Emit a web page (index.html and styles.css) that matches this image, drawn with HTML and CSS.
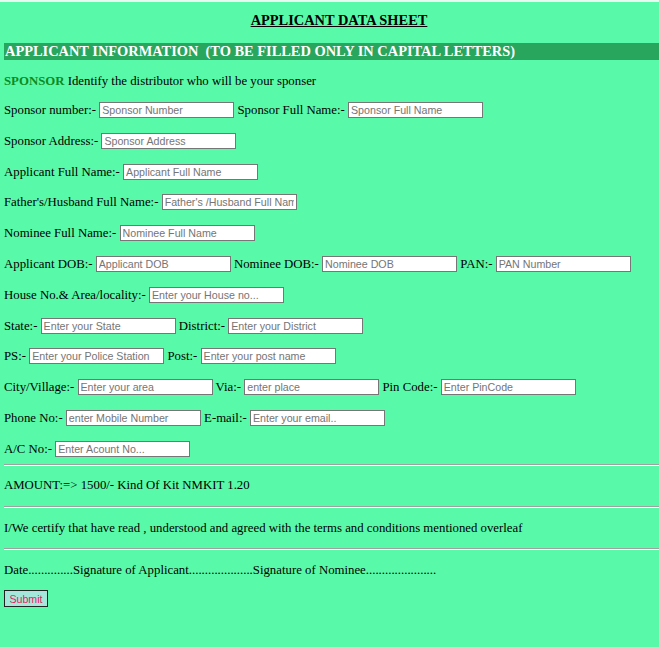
FILE: index.html
```html
<!DOCTYPE html>
<html>
<head>
<meta charset="utf-8">
<title>Applicant Data Sheet</title>
<link rel="stylesheet" href="styles.css">
</head>
<body>
<div class="topline"></div>
<div class="page">
  <div class="title"><u>APPLICANT DATA SHEET</u></div>
  <div class="bar">APPLICANT INFORMATION&nbsp; (TO BE FILLED ONLY IN CAPITAL LETTERS)</div>
  <div class="sponsor"><b class="green">SPONSOR</b> Identify the distributor who will be your sponser</div>
  <form class="form">
    <div class="row">Sponsor number:- <input type="text" placeholder="Sponsor Number"> Sponsor Full Name:- <input type="text" placeholder="Sponsor Full Name"></div>
    <div class="row">Sponsor Address:- <input type="text" placeholder="Sponsor Address"></div>
    <div class="row">Applicant Full Name:- <input type="text" placeholder="Applicant Full Name"></div>
    <div class="row">Father's/Husband Full Name:- <input type="text" placeholder="Father's /Husband Full Name"></div>
    <div class="row">Nominee Full Name:- <input type="text" placeholder="Nominee Full Name"></div>
    <div class="row">Applicant DOB:- <input type="text" placeholder="Applicant DOB"> Nominee DOB:- <input type="text" placeholder="Nominee DOB"> PAN:- <input type="text" placeholder="PAN Number"></div>
    <div class="row">House No.&amp; Area/locality:- <input type="text" placeholder="Enter your House no..."></div>
    <div class="row">State:- <input type="text" placeholder="Enter your State"> District:- <input type="text" placeholder="Enter your District"></div>
    <div class="row">PS:- <input type="text" placeholder="Enter your Police Station"> Post:- <input type="text" placeholder="Enter your post name"></div>
    <div class="row">City/Village:- <input type="text" placeholder="Enter your area"> Via:- <input type="text" placeholder="enter place"> Pin Code:- <input type="text" placeholder="Enter PinCode"></div>
    <div class="row">Phone No:- <input type="text" placeholder="enter Mobile Number"> E-mail:- <input type="text" placeholder="Enter your email.."></div>
    <div class="row row-last">A/C No:- <input type="text" placeholder="Enter Acount No..."></div>
    <hr class="rule first">
    <div class="line">AMOUNT:=&gt; 1500/- Kind Of Kit NMKIT 1.20</div>
    <hr class="rule">
    <div class="line">I/We certify that have read , understood and agreed with the terms and conditions mentioned overleaf</div>
    <hr class="rule">
    <div class="line">Date..............Signature of Applicant....................Signature of Nominee......................</div>
    <button type="button" class="submit">Submit</button>
  </form>
</div>
</body>
</html>
```
FILE: styles.css
```css
html, body {
  margin: 0;
  padding: 0;
  background: #58faa9;
}
body {
  font-family: "Liberation Serif", "Times New Roman", serif;
  font-size: 12.8px;
  color: #000;
  overflow: hidden;
}
.topline {
  height: 2px;
  background: #e9fbf1;
}
.page {
  padding-left: 4px;
}
.title {
  margin-top: 10px;
  height: 16px;
  line-height: 16px;
  text-align: center;
  font-weight: bold;
  font-size: 14.4px;
  padding-left: 15px;
}
.bar {
  margin-top: 15px;
  height: 17px;
  line-height: 17px;
  background: #29a65e;
  color: #fff;
  font-weight: bold;
  font-size: 14.4px;
  padding-left: 1px;
  white-space: nowrap;
}
.sponsor {
  margin-top: 13.5px;
  line-height: 15px;
  height: 15px;
}
.green {
  color: #0f8a22;
}
.form {
  margin: 12.5px 0 0 0;
}
.row {
  height: 18px;
  line-height: 18px;
  margin-bottom: 12.8px;
  white-space: nowrap;
}
.row.row-last {
  margin-bottom: 0;
}
.row input {
  box-sizing: border-box;
  width: 135px;
  height: 16px;
  vertical-align: middle;
  margin: -2px 0 0 0;
  padding: 0 2px;
  border: 1px solid #767676;
  background: #fff;
  font-family: "Liberation Sans", Arial, sans-serif;
  font-size: 10.67px;
  color: #000;
}
.row input::placeholder {
  color: #757575;
  opacity: 1;
}
.rule {
  margin: 0;
  height: 0;
  border: 0;
  border-top: 1px solid #a0a0a0;
  border-bottom: 1px solid #f4fff8;
  margin-right: -4px;
}
.rule.first {
  margin-top: 6px;
}
.line {
  margin-top: 12.6px;
  margin-bottom: 12.6px;
  line-height: 15px;
  height: 15px;
  white-space: nowrap;
}
.submit {
  display: block;
  box-sizing: border-box;
  height: 17px;
  width: 44px;
  margin: 0;
  padding: 0;
  background: #a4e8dc;
  border: 1px solid #222;
  color: #e8235f;
  font-family: "Liberation Sans", Arial, sans-serif;
  font-size: 10.67px;
  line-height: 14px;
}
```
